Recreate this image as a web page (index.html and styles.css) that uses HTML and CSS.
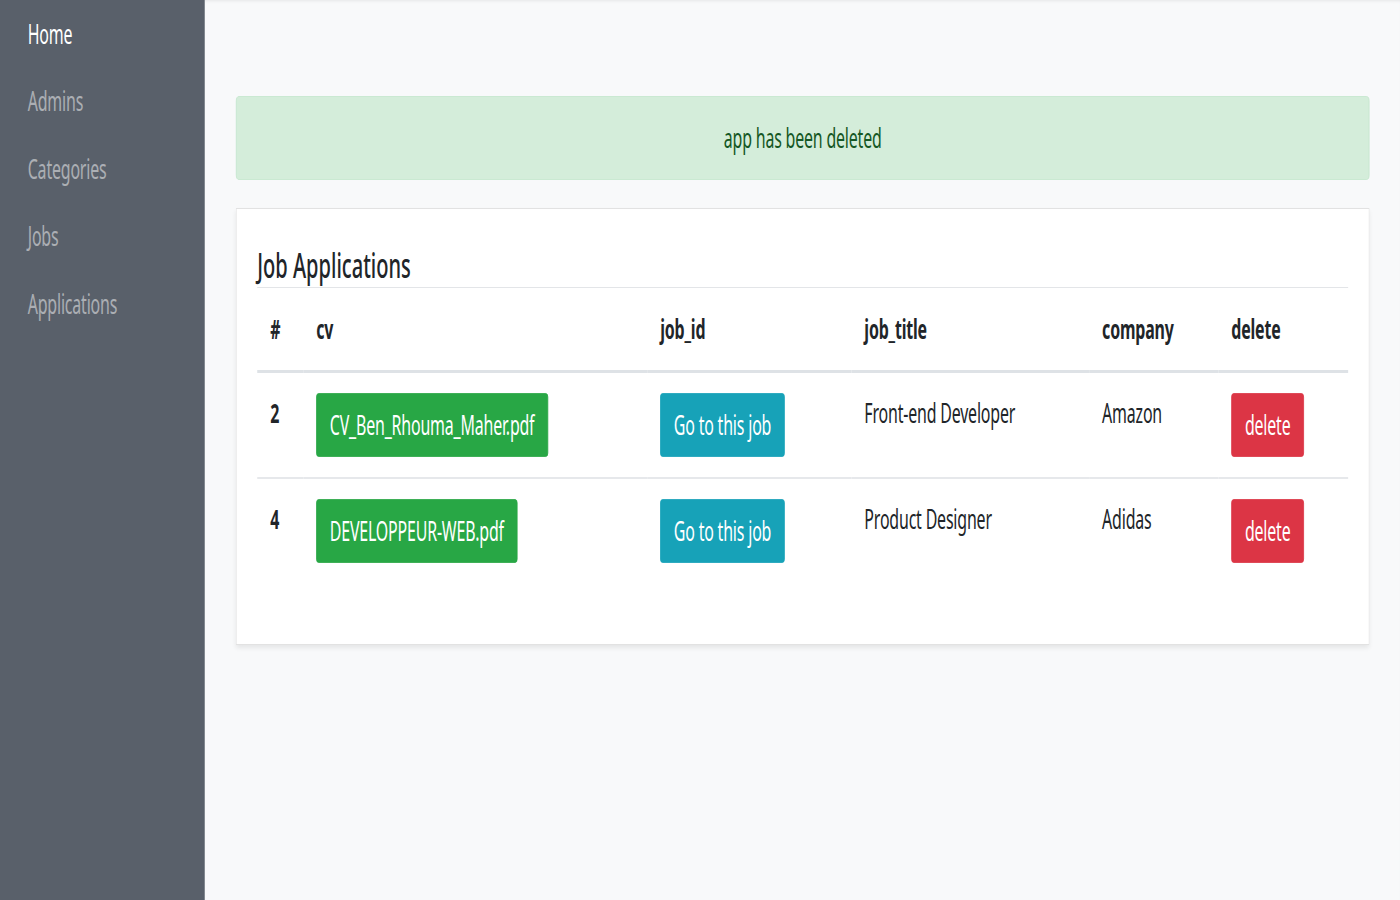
FILE: index.html
```html
<!DOCTYPE html>
<html lang="en">
<head>
<meta charset="utf-8">
<title>Job Applications</title>
<link rel="stylesheet" href="styles.css">
</head>
<body>
<div class="frame">
<div class="stage">
  <aside class="sidebar">
    <nav class="nav">
      <a class="nav-link active" href="#">Home</a>
      <a class="nav-link" href="#">Admins</a>
      <a class="nav-link" href="#">Categories</a>
      <a class="nav-link" href="#">Jobs</a>
      <a class="nav-link" href="#">Applications</a>
    </nav>
  </aside>
  <main class="main">
    <div class="alert">app has been deleted</div>
    <section class="card">
      <h3 class="card-title">Job Applications</h3>
      <table class="table">
        <colgroup>
          <col class="c-num"><col class="c-cv"><col class="c-jobid"><col class="c-title"><col class="c-company"><col class="c-delete">
        </colgroup>
        <thead>
          <tr><th>#</th><th>cv</th><th>job_id</th><th>job_title</th><th>company</th><th>delete</th></tr>
        </thead>
        <tbody>
          <tr>
            <th>2</th>
            <td><a class="btn btn-success" href="#">CV_Ben_Rhouma_Maher.pdf</a></td>
            <td><a class="btn btn-info" href="#">Go to this job</a></td>
            <td>Front-end Developer</td>
            <td>Amazon</td>
            <td><a class="btn btn-danger" href="#">delete</a></td>
          </tr>
          <tr>
            <th>4</th>
            <td><a class="btn btn-success" href="#">DEVELOPPEUR-WEB.pdf</a></td>
            <td><a class="btn btn-info" href="#">Go to this job</a></td>
            <td>Product Designer</td>
            <td>Adidas</td>
            <td><a class="btn btn-danger" href="#">delete</a></td>
          </tr>
        </tbody>
      </table>
    </section>
  </main>
</div>
</div>
</body>
</html>
```

FILE: styles.css
```css
html, body {
  margin: 0;
  padding: 0;
  overflow: hidden;
  height: 100%;
}

body {
  font-family: "Noto Sans", "Open Sans", sans-serif;
  font-size: 27px;
  line-height: 40px;
  letter-spacing: -0.3px;
  color: #212529;
  background: #f8f9fa;
}

.frame {
  width: 1400px;
  height: 900px;
  overflow: hidden;
}

/* The reference is horizontally condensed; lay out in a wide space and squeeze it. */
.stage {
  width: 2373px;
  height: 900px;
  display: flex;
  transform: scaleX(0.59);
  transform-origin: 0 0;
}

.sidebar {
  width: 347px;
  flex: 0 0 347px;
  background: #59606a;
}

.nav {
  display: flex;
  flex-direction: column;
}

.nav-link {
  display: block;
  padding: 13.5px 47px 14px;
  line-height: 40px;
  color: rgba(255, 255, 255, 0.5);
  text-decoration: none;
}

.nav-link.active {
  color: #fff;
}

.main {
  flex: 1;
  padding: 96px 52px 0 53px;
  box-shadow: inset 0 4px 4px -3px rgba(0, 0, 0, 0.08);
}

.alert {
  background: #d4edda;
  border: 1px solid #c3e6cb;
  border-radius: 5px;
  color: #155724;
  text-align: center;
  padding: 21px 20px;
  line-height: 40px;
}

.card {
  margin-top: 28px;
  background: #fff;
  border: 1px solid #e2e2e2;
  box-shadow: 0 3px 6px rgba(0, 0, 0, 0.08);
  padding: 34px 35px 61px;
}

.card-title {
  margin: 0;
  font-size: 34px;
  line-height: 44px;
  font-weight: 500;
  letter-spacing: 0;
  border-bottom: 1px solid #e3e5e8;
}

.table {
  width: 100%;
  border-collapse: collapse;
  table-layout: fixed;
}

.c-num { width: 78px; }
.c-cv { width: 583px; }
.c-jobid { width: 346px; }
.c-title { width: 403px; }
.c-company { width: 219px; }
.c-delete { width: 220px; }

.table th,
.table td {
  padding: 20px 22px;
  text-align: left;
  vertical-align: top;
  line-height: 40px;
  white-space: nowrap;
}

.table thead th {
  padding-top: 21px;
  padding-bottom: 21px;
  font-weight: 700;
  border-bottom: 3px solid #dee2e6;
}

.table tbody th {
  font-weight: 700;
}

.table tbody tr + tr th,
.table tbody tr + tr td {
  border-top: 2px solid #e6e8eb;
}

.btn {
  display: inline-block;
  padding: 11px 22px;
  border: 1px solid transparent;
  border-radius: 4px;
  line-height: 40px;
  color: #fff;
  text-decoration: none;
}

.btn-success { background: #28a745; border-color: #28a745; }
.btn-info { background: #17a2b8; border-color: #17a2b8; }
.btn-danger { background: #dc3545; border-color: #dc3545; }
```
